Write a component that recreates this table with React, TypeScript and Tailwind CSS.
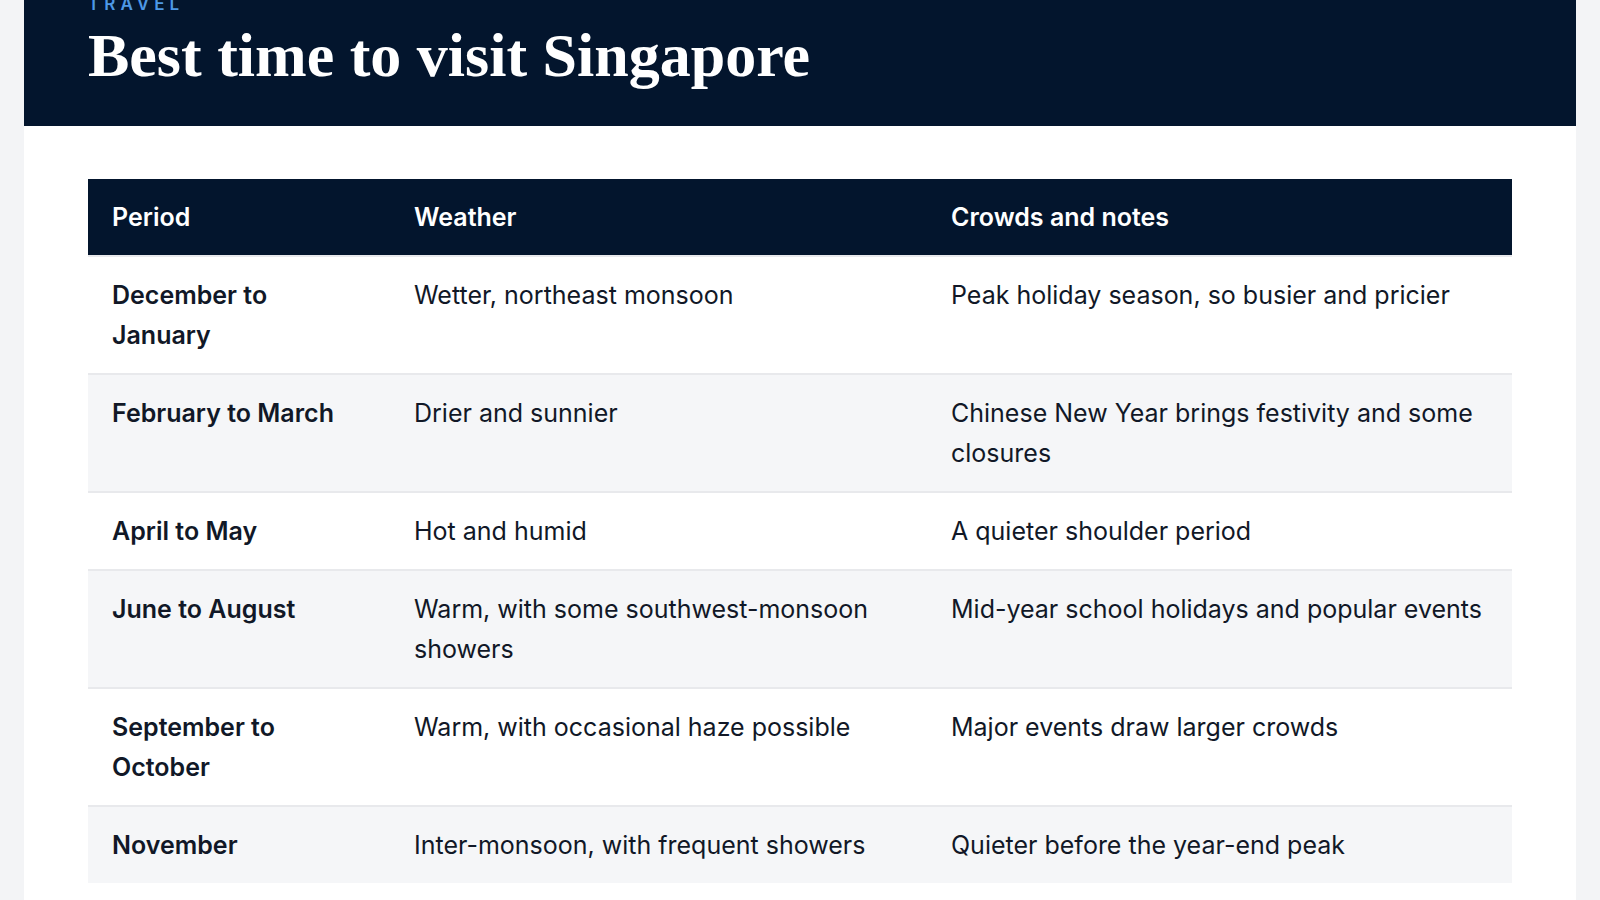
const ROWS = [
  { period: 'December to January', weather: 'Wetter, northeast monsoon', notes: 'Peak holiday season, so busier and pricier' },
  { period: 'February to March', weather: 'Drier and sunnier', notes: 'Chinese New Year brings festivity and some closures' },
  { period: 'April to May', weather: 'Hot and humid', notes: 'A quieter shoulder period' },
  { period: 'June to August', weather: 'Warm, with some southwest-monsoon showers', notes: 'Mid-year school holidays and popular events' },
  { period: 'September to October', weather: 'Warm, with occasional haze possible', notes: 'Major events draw larger crowds' },
  { period: 'November', weather: 'Inter-monsoon, with frequent showers', notes: 'Quieter before the year-end peak' },
];

export default function App() {
  return (
    <div className="min-h-screen bg-[#f3f4f6] px-6 font-['Inter',_'Liberation_Sans',_sans-serif] text-[#111827] overflow-hidden">
      <article className="-mt-[48px] bg-white">
        <header className="bg-[#03152d] px-16 pt-10 pb-[35px]">
          <p className="text-[17px] leading-6 font-semibold uppercase tracking-[0.3em] text-[#4d98e6]">Travel</p>
          <h1 className="mt-1 font-['Liberation_Serif',_serif] text-[62px] leading-[1.15] font-bold text-white">
            Best time to visit Singapore
          </h1>
        </header>

        <div className="px-16 pt-[53px] pb-16">
          <table className="w-full border-collapse text-left text-[25px] leading-10">
            <thead>
              <tr className="bg-[#03152d] text-white">
                <th className="w-[302px] px-6 py-[18px] font-semibold">Period</th>
                <th className="w-[537px] px-6 py-[18px] font-semibold">Weather</th>
                <th className="px-6 py-[18px] font-semibold">Crowds and notes</th>
              </tr>
            </thead>
            <tbody>
              {ROWS.map((row, i) => (
                <tr
                  key={row.period}
                  className={i % 2 === 1 ? 'bg-[#f5f6f8] border-t-2 border-[#e8e9ec]' : 'bg-white border-t-2 border-[#e8e9ec]'}
                >
                  <td className="px-6 py-[18px] align-top font-semibold">{row.period}</td>
                  <td className="px-6 py-[18px] align-top">{row.weather}</td>
                  <td className="px-6 py-[18px] align-top">{row.notes}</td>
                </tr>
              ))}
            </tbody>
          </table>
        </div>
      </article>
    </div>
  );
}
